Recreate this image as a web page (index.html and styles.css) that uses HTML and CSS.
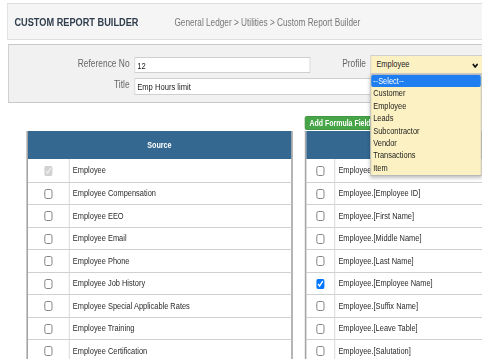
FILE: index.html
```html
<!DOCTYPE html>
<html>
<head>
    <meta charset="utf-8">
    <title>Custom Report Builder</title>
    <link rel="stylesheet" href="styles.css">
</head>
<body>
<div class="page">
    <!-- page title -->
    <div class="page-header">
        <h1 class="page-title">CUSTOM REPORT BUILDER</h1>
        <span class="crumbs">General Ledger &gt; Utilities &gt; Custom Report Builder</span>
    </div>

    <!-- report details -->
    <div class="report-form">
        <div class="form-row">
            <label class="form-label">Reference No</label>
            <input type="text" class="text-input ref-input" value="12">
            <label class="form-label profile-label">Profile</label>
            <div class="profile-select">
                <span class="select-value">Employee</span>
                <svg class="select-arrow" width="8" height="5" viewBox="0 0 8 5"><path d="M1 1 L4 4 L7 1" fill="none" stroke="#111" stroke-width="1.8"/></svg>
                <ul class="select-list">
                    <li class="active">--Select--</li>
                    <li>Customer</li>
                    <li>Employee</li>
                    <li>Leads</li>
                    <li>Subcontractor</li>
                    <li>Vendor</li>
                    <li>Transactions</li>
                    <li>Item</li>
                </ul>
            </div>
        </div>
        <div class="form-row">
            <label class="form-label">Title</label>
            <input type="text" class="text-input title-input" value="Emp Hours limit">
        </div>
    </div>

    <!-- source / fields -->
    <div class="builder">
        <div class="toolbar">
            <button class="btn-formula">Add Formula Field</button>
        </div>

        <table class="field-table source-table">
            <tr><th colspan="2">Source</th></tr>
            <tr><td class="check-cell"><input type="checkbox" checked disabled></td><td>Employee</td></tr>
            <tr><td class="check-cell"><input type="checkbox"></td><td>Employee Compensation</td></tr>
            <tr><td class="check-cell"><input type="checkbox"></td><td>Employee EEO</td></tr>
            <tr><td class="check-cell"><input type="checkbox"></td><td>Employee Email</td></tr>
            <tr><td class="check-cell"><input type="checkbox"></td><td>Employee Phone</td></tr>
            <tr><td class="check-cell"><input type="checkbox"></td><td>Employee Job History</td></tr>
            <tr><td class="check-cell"><input type="checkbox"></td><td>Employee Special Applicable Rates</td></tr>
            <tr><td class="check-cell"><input type="checkbox"></td><td>Employee Training</td></tr>
            <tr><td class="check-cell"><input type="checkbox"></td><td>Employee Certification</td></tr>
        </table>

        <table class="field-table target-table">
            <tr><th colspan="2">Fields</th></tr>
            <tr><td class="check-cell"><input type="checkbox"></td><td>Employee.[Employee Key]</td></tr>
            <tr><td class="check-cell"><input type="checkbox"></td><td>Employee.[Employee ID]</td></tr>
            <tr><td class="check-cell"><input type="checkbox"></td><td>Employee.[First Name]</td></tr>
            <tr><td class="check-cell"><input type="checkbox"></td><td>Employee.[Middle Name]</td></tr>
            <tr><td class="check-cell"><input type="checkbox"></td><td>Employee.[Last Name]</td></tr>
            <tr><td class="check-cell"><input type="checkbox" checked></td><td>Employee.[Employee Name]</td></tr>
            <tr><td class="check-cell"><input type="checkbox"></td><td>Employee.[Suffix Name]</td></tr>
            <tr><td class="check-cell"><input type="checkbox"></td><td>Employee.[Leave Table]</td></tr>
            <tr><td class="check-cell"><input type="checkbox"></td><td>Employee.[Salutation]</td></tr>
        </table>
    </div>
</div>
</body>
</html>
```

FILE: styles.css
```css
*{
    margin: 0;
    padding: 0;
    box-sizing: border-box;
}
html, body{
    overflow: hidden;
    background: #fff;
}
body{
    font-family: "Liberation Sans", Arial, sans-serif;
    color: #333;
}
.page{
    width: 640px;
    padding-top: 3px;
    transform: scaleX(0.8);
    transform-origin: 0 0;
}

/* page title */
.page-header{
    display: flex;
    align-items: center;
    gap: 45px;
    height: 37px;
    margin-left: 9px;
    padding-left: 8px;
    background-color: #f5f5f5;
    border: 1px solid #dedede;
    border-right: none;
}
.page-title{
    font-size: 11.5px;
    font-weight: bold;
    color: #2f3d4c;
}
.crumbs{
    font-size: 10.3px;
    color: #777;
    padding-top: 2px;
}

/* report details */
.report-form{
    margin: 4px 0 0 10px;
    padding: 10px 0 7px;
    background-color: #f1f1f1;
    border: 1px solid #c9c9c9;
    border-right: none;
}
.form-row{
    display: flex;
    align-items: flex-start;
}
.form-row + .form-row{
    margin-top: 4px;
}
.form-label{
    width: 152px;
    padding-right: 1px;
    text-align: right;
    font-size: 10.5px;
    line-height: 12px;
    color: #666;
}
.form-row:first-child .form-label{
    margin-top: 2px;
}
.text-input{
    margin-left: 4.5px;
    padding-left: 3px;
    border: 1px solid #cfcfcf;
    background: #fff;
    font-family: inherit;
    font-size: 9.5px;
    color: #222;
    outline: none;
}
.ref-input{
    width: 220px;
    height: 16px;
    margin-top: 2px;
}
.title-input{
    width: 437px;
    height: 17px;
}
.profile-label{
    width: 70px;
    margin-right: 5px;
    padding-right: 0;
}

/* profile select and its open list */
.profile-select{
    position: relative;
    width: 142px;
    height: 19px;
    padding-left: 7px;
    background-color: #fcf1c2;
    border: 1px solid #cfcfcf;
    font-size: 9.3px;
    line-height: 17px;
    color: #222;
}
.select-arrow{
    position: absolute;
    top: 7px;
    right: 6px;
}
.select-list{
    position: absolute;
    top: 18px;
    left: -1px;
    z-index: 10;
    width: 139px;
    height: 102px;
    list-style: none;
    background-color: #fcf1c2;
    border: 1px solid #b9b9b9;
    box-shadow: 0 2px 4px rgba(0, 0, 0, 0.25);
}
.select-list li{
    height: 12.4px;
    line-height: 12.4px;
    padding-left: 3px;
    font-size: 9.3px;
    color: #222;
}
.select-list li.active{
    background-color: #1f7ff0;
    color: #fff;
    border-radius: 2px;
}

/* source / fields */
.builder{
    display: grid;
    grid-template-columns: 333.5px 1fr;
    column-gap: 15px;
    row-gap: 5px;
    margin: 9px 0 0 32.5px;
}
.toolbar{
    grid-column: 2;
    height: 14px;
}
.btn-formula{
    height: 14px;
    padding: 0 5px;
    background-color: #46a546;
    border: 1px solid #3a8f3a;
    border-radius: 2px;
    font-family: inherit;
    font-size: 8.7px;
    font-weight: bold;
    color: #fff;
}

.field-table{
    border-collapse: separate;
    border-spacing: 0;
    border-left: 2px solid #a5a5a5;
    border-right: 2px solid #a5a5a5;
    font-size: 9.3px;
    color: #2a2a2a;
}
.source-table{
    grid-column: 1;
    width: 100%;
}
.target-table{
    grid-column: 2;
    width: 100%;
    border-right: none;
}
.field-table th{
    height: 28px;
    background-color: #346890;
    color: #fff;
    font-size: 9px;
    font-weight: bold;
}
.field-table tr{
    height: 22.5px;
}
.field-table td{
    padding: 0 4px;
    border-top: 1px solid #d0d0d0;
    vertical-align: middle;
}
.field-table tr:nth-child(2) td{
    border-top: none;
}
.check-cell{
    text-align: center;
    border-right: 1px solid #d0d0d0;
}
.source-table .check-cell{
    width: 52.5px;
}
.target-table .check-cell{
    width: 36px;
}
.check-cell input{
    width: 11px;
    height: 10px;
    margin: 0;
    vertical-align: middle;
}
```
